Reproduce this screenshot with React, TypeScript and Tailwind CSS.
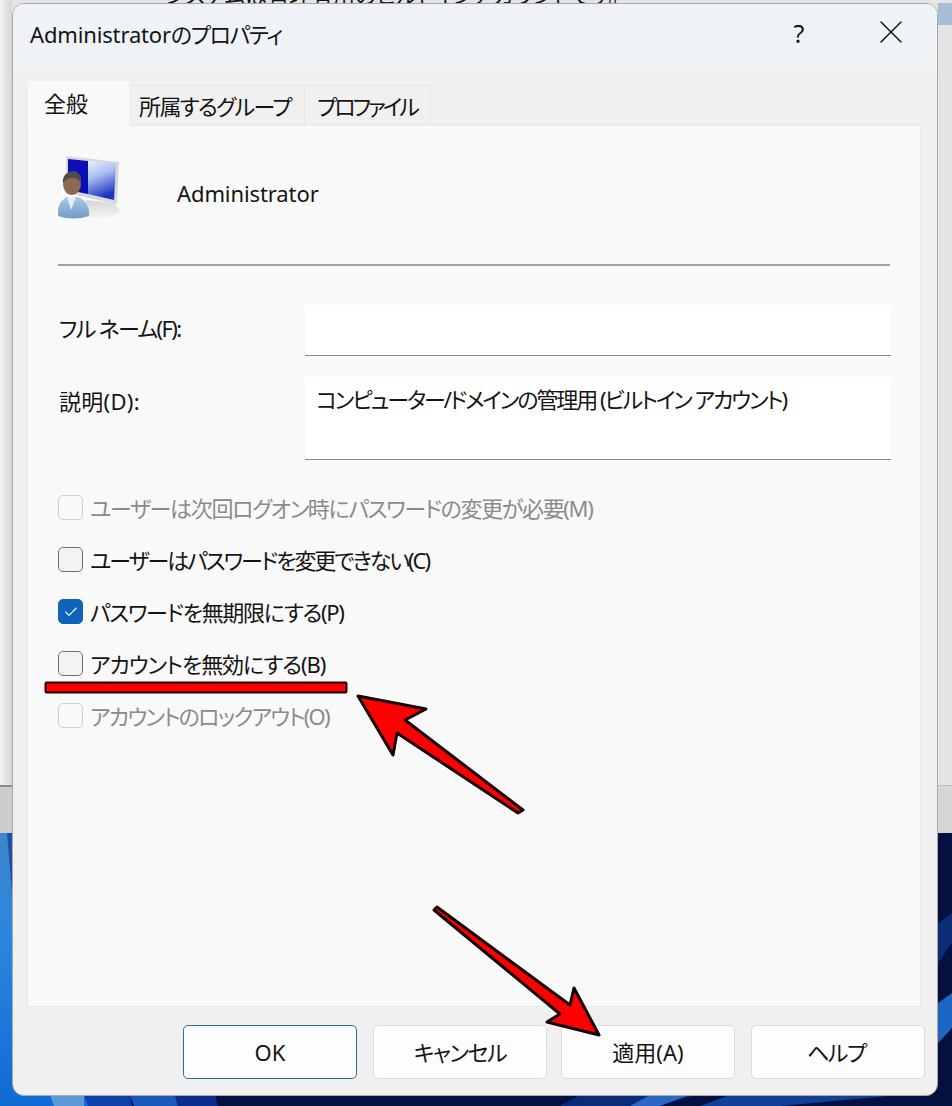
import { X, Check } from 'lucide-react';

const options = [
  { label: 'ユーザーは次回ログオン時にパスワードの変更が必要(M)', disabled: true, tracking: 'tracking-[-1.35px]' },
  { label: 'ユーザーはパスワードを変更できない(C)', tracking: 'tracking-[-2.05px]' },
  { label: 'パスワードを無期限にする(P)', checked: true, tracking: 'tracking-[-1.3px]' },
  { label: 'アカウントを無効にする(B)', tracking: 'tracking-[-1.05px]' },
  { label: 'アカウントのロックアウト(O)', disabled: true, tracking: 'tracking-[-1.7px]' },
];

const buttons = [
  { label: 'OK', primary: true, className: '' },
  { label: 'キャンセル', className: 'tracking-[-1.4px]' },
  { label: '適用(A)', className: '-ml-[2px]' },
  { label: 'ヘルプ', className: 'tracking-[-1.4px] pr-[3px]' },
];

function UserIcon() {
  return (
    <svg className="blur-[0.5px]" width="64" height="64" viewBox="0 0 64 64">
      <defs>
        <linearGradient id="glass" x1="0" y1="0" x2="0.3" y2="1">
          <stop offset="0" stopColor="#eef2fe" />
          <stop offset="0.45" stopColor="#a8bcf0" />
          <stop offset="1" stopColor="#1c34c0" />
        </linearGradient>
        <linearGradient id="shirt" x1="0" y1="0" x2="0" y2="1">
          <stop offset="0" stopColor="#a9c8e4" />
          <stop offset="1" stopColor="#6f9cc6" />
        </linearGradient>
        <linearGradient id="stand" x1="0" y1="0" x2="0" y2="1">
          <stop offset="0" stopColor="#d4d6d8" />
          <stop offset="1" stopColor="#f4f4f4" />
        </linearGradient>
      </defs>
      <polygon points="28,44 56,47 62,56 50,62 28,62" fill="url(#stand)" />
      <polygon points="8,0 61,6 59,48 8,37" fill="#d6d8da" />
      <polygon points="10,3 30,5 30,38 10,34" fill="#0a10b4" />
      <polygon points="30,5 58,8 56,44 30,38" fill="url(#glass)" />
      <path d="M0 60 C-1 50 3 44 9 41 L20 41 C28 44 32 52 31 60 Q15 65 0 60 Z" fill="url(#shirt)" />
      <polygon points="9,41 18,41 13,54" fill="#e6eef4" />
      <ellipse cx="14" cy="28" rx="9" ry="11" fill="#8d6a4c" />
      <path d="M5 27 C4 19 10 15 16 15 C22 16 24 21 23 28 C21 23 17 21 12 22 C8 23 7 25 5 27 Z" fill="#4b4d4e" />
    </svg>
  );
}

function Wallpaper() {
  return (
    <svg className="absolute left-0 top-[833px]" width="952" height="273" viewBox="0 0 952 273">
      <defs>
        <linearGradient id="leftBlue" x1="0" y1="0" x2="0" y2="1">
          <stop offset="0" stopColor="#3c86cc" />
          <stop offset="0.4" stopColor="#2a86de" />
          <stop offset="1" stopColor="#0f6ad6" />
        </linearGradient>
      </defs>
      <rect width="952" height="273" fill="#04103f" />
      <rect width="112" height="273" fill="url(#leftBlue)" />
      <polygon points="7,0 12,0 12,60" fill="#1c4ea4" />
      <polygon points="50,262 84,262 84,273 54,273" fill="#5b9ad8" />
      <polygon points="84,262 130,262 132,273 88,273" fill="#0f3fa8" />
      <polygon points="130,262 175,262 178,273 134,273" fill="#1b58bc" />
      <polygon points="175,262 215,262 218,273 178,273" fill="#0a2c8c" />
      <polygon points="560,273 580,262 700,262 640,273" fill="#0b2a78" />
      <polygon points="630,273 650,262 690,262 660,273" fill="#2c66c8" />
      <polygon points="700,273 730,262 900,262 780,273" fill="#124098" />
      <polygon points="938,170 952,160 952,195 938,210" fill="#1e66c4" />
      <polygon points="938,90 952,80 952,110 938,130" fill="#0c2c78" />
    </svg>
  );
}

function Annotations() {
  return (
    <svg className="absolute left-0 top-0 pointer-events-none" width="952" height="1106" viewBox="0 0 952 1106">
      <rect x="45.5" y="682.5" width="301" height="10" rx="1" fill="#ff0000" stroke="#1a0000" strokeWidth="2" />
      <polygon
        points="358,696 426,709 405,720 523,810 518,813 397,733 393,755"
        fill="#ff0000"
        stroke="#140000"
        strokeWidth="3"
        strokeLinejoin="round"
      />
      <polygon
        points="437,907 570,1005 574,988 599,1035 547,1022 560,1014 434,910"
        fill="#ff0000"
        stroke="#140000"
        strokeWidth="3"
        strokeLinejoin="round"
      />
    </svg>
  );
}

export default function App() {
  return (
    <div className="relative w-[952px] h-[1106px] overflow-hidden bg-[#e4e4e4] pl-[12px] pt-[3px] font-['Noto_Sans','Noto_Sans_CJK_JP',sans-serif] [font-feature-settings:'palt'] text-[#141414]">
      {/* window behind the dialog */}
      <div className="absolute left-0 top-0 w-[12px] h-[833px] bg-gradient-to-r from-[#f2f2f2] to-[#d6d6d6]" />
      <div className="absolute left-0 top-[785px] w-[12px] h-[48px] border-t-2 border-[#8c8c8c] bg-[#cccccc]" />
      <div className="absolute right-0 top-[3px] w-[14px] h-[22px] bg-[#a9bdd6]" />
      <div className="absolute right-0 top-[785px] w-[14px] h-[48px] border-t border-[#bdbdbd] bg-[#d6d6d6]" />
      <div className="absolute left-[165px] -top-[18px] text-[22px] leading-[24px] whitespace-nowrap">
        システムは管理者用のビルトインアカウントです。
      </div>
      <Wallpaper />

      <div className="relative flex flex-col w-[926px] h-[1093px] rounded-[12px] border border-[#a9a9a9] bg-[#f0f0f0] overflow-hidden">
        {/* title bar */}
        <div className="flex justify-between h-[76px] bg-gradient-to-b from-[#eff3f8] from-60% to-[#f0f0f0]">
          <div className="pl-[17px] pt-[13px] text-[22px] leading-[34px] tracking-[-0.15px]">
            Administrator<span className="tracking-[-1.4px]">のプロパティ</span>
          </div>
          <div className="flex">
            <div className="flex justify-center w-[92px] pt-[12px] text-[25px] leading-[34px]">?</div>
            <div className="flex justify-center w-[92px] pt-[8px]">
              <X size={40} strokeWidth={0.9} color="#141414" />
            </div>
          </div>
        </div>

        {/* tabs */}
        <div className="flex items-end h-[45px] pl-[14px] text-[22px] whitespace-nowrap">
          <div className="relative z-10 w-[103px] h-[48px] -mb-[3px] pl-[16px] pt-[5px] leading-[34px] bg-[#f9f9f9] border-t border-x border-[#f0f0f0]">全般</div>
          <div className="w-[175px] h-[40px] pl-[9px] pt-[3px] leading-[34px] tracking-[-1.6px] bg-[#f0f0f0] border-t border-r border-[#e6e6e6]">所属するグループ</div>
          <div className="w-[126px] h-[40px] pl-[12px] pt-[3px] leading-[34px] tracking-[-3px] bg-[#f0f0f0] border-t border-r border-[#e6e6e6]">プロファイル</div>
        </div>

        {/* page */}
        <div className="flex flex-col flex-1 ml-[14px] mr-[16px] bg-[#f9f9f9] border border-[#e8e8e8] pl-[30px] pr-[29px] pt-[30px]">
          <div className="flex items-center h-[64px]">
            <UserIcon />
            <span className="ml-[55px] mt-[10px] text-[22px] leading-[34px] tracking-[-0.1px]">Administrator</span>
          </div>
          <div className="mt-[44px] h-[2px] mr-[1px] bg-[#a0a0a0]" />

          <div className="grid grid-cols-[247px_1fr] mt-[39px] text-[22px] leading-[34px]">
            <div className="pl-[1px] pt-[6px] tracking-[-1.65px]">フル ネーム(F):</div>
            <div className="h-[51px] bg-white border-b border-[#8a8a8a]" />
            <div className="mt-[21px] pl-[1px] pt-[7px] tracking-[0.3px]">説明(D):</div>
            <div className="mt-[21px] h-[83px] px-[11px] pt-[5px] bg-white border-b border-[#8a8a8a] tracking-[-2.05px]">
              コンピューター/ドメインの管理用 (ビルトイン アカウント)
            </div>
          </div>

          <div className="flex flex-col gap-[27px] mt-[35px] text-[22px]">
            {options.map((o) => (
              <div key={o.label} className={`flex items-center gap-[7px] h-[25px] ${o.disabled ? 'text-[#8b8b8b]' : ''}`}>
                <div
                  className={`flex items-center justify-center w-[25px] h-[25px] rounded-[5px] border ${
                    o.checked
                      ? 'bg-[#0f63b8] border-[#0f63b8]'
                      : o.disabled
                        ? 'bg-[#f9f9f9] border-[#cfcfcf]'
                        : 'bg-[#f3f3f3] border-[#6e6e6e]'
                  }`}
                >
                  {o.checked && <Check size={16} strokeWidth={1.6} color="#ffffff" />}
                </div>
                <span className={`leading-[34px] whitespace-nowrap ${o.tracking}`}>{o.label}</span>
              </div>
            ))}
          </div>
        </div>

        {/* buttons */}
        <div className="flex justify-end gap-[16px] h-[88px] pt-[18px] pr-[12px]">
          {buttons.map((b) => (
            <button
              key={b.label}
              className={`w-[174px] h-[54px] rounded-[5px] bg-[#fdfdfd] text-[22px] border ${
                b.primary ? 'border-[#2f6aa8]' : 'border-[#dcdcdc]'
              } ${b.className}`}
            >
              {b.label}
            </button>
          ))}
        </div>
      </div>

      <Annotations />
    </div>
  );
}
